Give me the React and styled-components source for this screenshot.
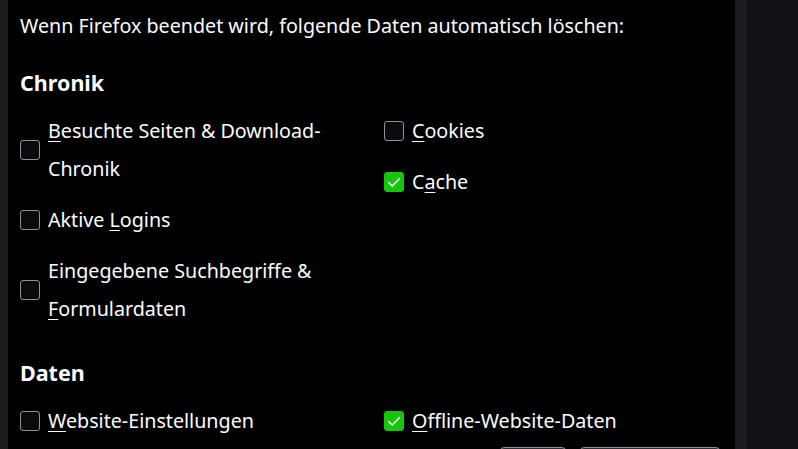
import React from 'react';
import styled, { createGlobalStyle } from 'styled-components';

const GlobalStyle = createGlobalStyle`
  html, body {
    margin: 0;
    padding: 0;
    background: #000;
    overflow: hidden;
  }
  body {
    font-family: "Noto Sans", "Open Sans", sans-serif;
    color: #fbfbfe;
  }
`;

const Check = ({ checked }) => (
  <Box checked={checked}>
    {checked && (
      <svg width="16" height="16" viewBox="0 0 16 16">
        <path d="M2.3 8.2 L6.2 12 L13.8 4.2" fill="none" stroke="#fff" strokeWidth="1.5" />
      </svg>
    )}
  </Box>
);

const Option = ({ checked, children }) => (
  <Row>
    <Check checked={checked} />
    <Label>{children}</Label>
  </Row>
);

const App = () => {
  return (
    <Frame>
      <GlobalStyle />
      <SideStrip />
      <Dialog>
        <Intro>Wenn Firefox beendet wird, folgende Daten automatisch löschen:</Intro>

        <Heading>Chronik</Heading>
        <Columns>
          <Column>
            <Option><Key>B</Key>esuchte Seiten &amp; Download-Chronik</Option>
            <Option>Aktive <Key>L</Key>ogins</Option>
            <Option>Eingegebene Suchbegriffe &amp; <Key>F</Key>ormulardaten</Option>
          </Column>
          <Column>
            <Option><Key>C</Key>ookies</Option>
            <Option checked>C<Key>a</Key>che</Option>
          </Column>
        </Columns>

        <Heading spaced>Daten</Heading>
        <Columns>
          <Column>
            <Option><Key>W</Key>ebsite-Einstellungen</Option>
          </Column>
          <Column>
            <Option checked><Key>O</Key>ffline-Website-Daten</Option>
          </Column>
        </Columns>

        {/* only the top edges of the dialog buttons are in view */}
        <Buttons>
          <Button width={66} aria-label="OK" />
          <Button width={140} aria-label="Abbrechen" />
        </Buttons>
      </Dialog>
      <SideStrip wide />
      <Backdrop />
    </Frame>
  );
};

const Frame = styled.div`
  display: flex;
  height: 449px;
  overflow: hidden;
`;

const SideStrip = styled.div`
  flex: 0 0 ${p => (p.wide ? 12 : 8)}px;
  background: #1c1b22;
`;

const Backdrop = styled.div`
  flex: 1;
  background: #111116;
`;

const Dialog = styled.div`
  flex: 0 0 727px;
  box-sizing: border-box;
  padding: 7px 0 0 12px;
  background: #000;
`;

const Intro = styled.div`
  font-size: 19.7px;
  line-height: 38px;
  white-space: nowrap;
`;

const Heading = styled.div`
  margin-top: ${p => (p.spaced ? 26 : 19)}px;
  font-size: 21.5px;
  font-weight: 700;
  line-height: 38px;
`;

const Columns = styled.div`
  display: grid;
  grid-template-columns: 364px 1fr;
  margin-top: 10px;
`;

const Column = styled.div`
  display: flex;
  flex-direction: column;
  gap: 13px;
`;

const Row = styled.div`
  display: flex;
  align-items: center;
  gap: 8px;
`;

const Box = styled.div`
  flex: 0 0 auto;
  box-sizing: border-box;
  width: 20px;
  height: 20px;
  border-radius: 3px;
  border: 1px solid ${p => (p.checked ? '#16c60c' : '#8f8f9d')};
  background: ${p => (p.checked ? '#16c60c' : '#0b0b0d')};
  display: flex;
  align-items: center;
  justify-content: center;
`;

const Label = styled.div`
  max-width: 316px;
  font-size: 19.7px;
  line-height: 38px;
`;

const Key = styled.span`
  text-decoration: underline;
  text-decoration-thickness: 1px;
  text-underline-offset: 3px;
`;

const Buttons = styled.div`
  display: flex;
  justify-content: flex-end;
  gap: 14px;
  margin: 7px 15px 0 0;
`;

const Button = styled.button`
  box-sizing: border-box;
  width: ${p => p.width}px;
  height: 34px;
  padding: 0;
  border: 1px solid #8f8f9d;
  border-radius: 4px;
  background: #2b2a33;
`;

export default App;
